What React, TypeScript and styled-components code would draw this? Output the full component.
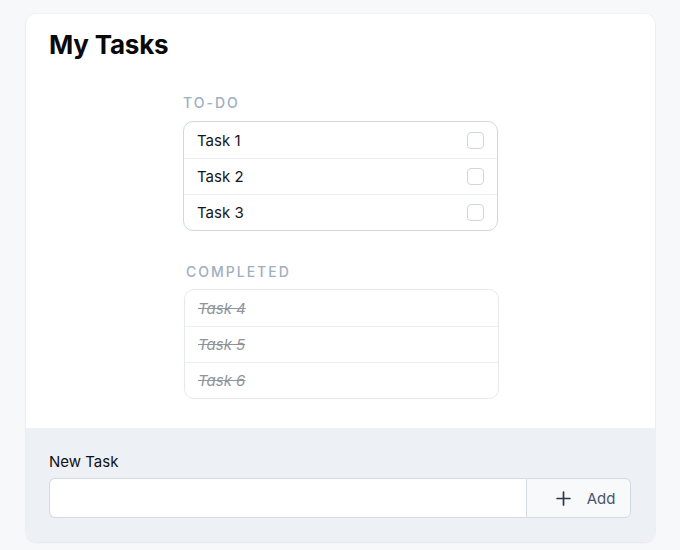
import React from "react";
import styled, { createGlobalStyle } from "styled-components";

const Global = createGlobalStyle`
  html, body { margin: 0; padding: 0; background: #f7f8fa; }
  body { font-family: Inter, "Noto Sans", sans-serif; color: #111; }
  * { box-sizing: border-box; }
`;

const Page = styled.div`
  padding: 14px 25px 8px 26px;
`;

const Card = styled.div`
  background: #ffffff;
  border-radius: 10px;
  overflow: hidden;
  box-shadow: 0 1px 3px rgba(15, 23, 42, 0.05), 0 0 0 1px rgba(15, 23, 42, 0.02);
`;

const Body = styled.div`
  padding: 16px 23px 29px;
`;

const Title = styled.h1`
  margin: 0;
  font-size: 26px;
  line-height: 30px;
  font-weight: 700;
  letter-spacing: -0.2px;
  color: #0a0a0a;
`;

const Sections = styled.div`
  margin-top: 33px;
  display: flex;
  flex-direction: column;
  gap: 31px;
  align-items: center;
`;

const Section = styled.section<{ $shift: number }>`
  width: 315px;
  display: flex;
  flex-direction: column;
  margin-left: ${(p) => p.$shift}px;
`;

const SectionLabel = styled.div<{ $gap: number; $shift: number }>`
  font-size: 14px;
  line-height: 20px;
  letter-spacing: 2px;
  text-transform: uppercase;
  color: #a0aec0;
  font-weight: 500;
  margin-bottom: ${(p) => p.$gap}px;
  padding-left: ${(p) => p.$shift}px;
`;

const List = styled.ul<{ $done?: boolean }>`
  list-style: none;
  margin: 0;
  padding: 0;
  border: 1px solid ${(p) => (p.$done ? "#e6eaf0" : "#cfd7e2")};
  border-radius: 10px;
  overflow: hidden;
`;

const Row = styled.li<{ $done?: boolean }>`
  height: 36px;
  display: flex;
  align-items: center;
  justify-content: space-between;
  padding: 0 13px 0 13px;
  font-size: 15px;
  & + & {
    border-top: 1px solid ${(p) => (p.$done ? "#eceff4" : "#dde3ea")};
  }
`;

const TaskText = styled.span<{ $done?: boolean }>`
  color: ${(p) => (p.$done ? "#8f949b" : "#161616")};
  font-style: ${(p) => (p.$done ? "italic" : "normal")};
  text-decoration: ${(p) => (p.$done ? "line-through" : "none")};
  text-decoration-color: #8f949b;
`;

const Check = styled.span`
  width: 17px;
  height: 17px;
  border: 1px solid #cfd6df;
  border-radius: 4px;
  background: #fff;
`;

const Footer = styled.div`
  background: #edf0f5;
  padding: 24px 24px 24px 23px;
`;

const FieldLabel = styled.label`
  display: block;
  font-size: 15px;
  line-height: 20px;
  color: #111;
  margin-bottom: 6px;
`;

const InputRow = styled.div`
  display: flex;
  height: 40px;
`;

const Input = styled.input`
  flex: 1;
  min-width: 0;
  height: 100%;
  border: 1px solid #d3dae3;
  border-right: none;
  border-radius: 6px 0 0 6px;
  background: #fff;
  font: inherit;
  padding: 0 12px;
  outline: none;
`;

const AddButton = styled.button`
  width: 105px;
  height: 100%;
  display: flex;
  align-items: center;
  justify-content: center;
  gap: 15px;
  border: 1px solid #d3dae3;
  border-radius: 0 6px 6px 0;
  background: #f7f9fb;
  color: #4a5568;
  font-family: inherit;
  font-size: 15px;
  padding: 0 0 0 13px;
`;

const todo = ["Task 1", "Task 2", "Task 3"];
const done = ["Task 4", "Task 5", "Task 6"];

export default function App() {
  return (
    <>
      <Global />
      <Page>
        <Card>
          <Body>
            <Title>My Tasks</Title>
            <Sections>
              <Section $shift={0}>
                <SectionLabel $gap={8} $shift={0}>To-Do</SectionLabel>
                <List>
                  {todo.map((t) => (
                    <Row key={t}>
                      <TaskText>{t}</TaskText>
                      <Check />
                    </Row>
                  ))}
                </List>
              </Section>
              <Section $shift={2}>
                <SectionLabel $gap={7} $shift={2}>Completed</SectionLabel>
                <List $done>
                  {done.map((t) => (
                    <Row key={t} $done>
                      <TaskText $done>{t}</TaskText>
                    </Row>
                  ))}
                </List>
              </Section>
            </Sections>
          </Body>
          <Footer>
            <FieldLabel htmlFor="new-task">New Task</FieldLabel>
            <InputRow>
              <Input id="new-task" />
              <AddButton>
                <svg width="17" height="17" viewBox="0 0 24 24" fill="none" stroke="#2d3748" strokeWidth="2.4" strokeLinecap="round">
                  <path d="M12 3v18M3 12h18" />
                </svg>
                <span>Add</span>
              </AddButton>
            </InputRow>
          </Footer>
        </Card>
      </Page>
    </>
  );
}
